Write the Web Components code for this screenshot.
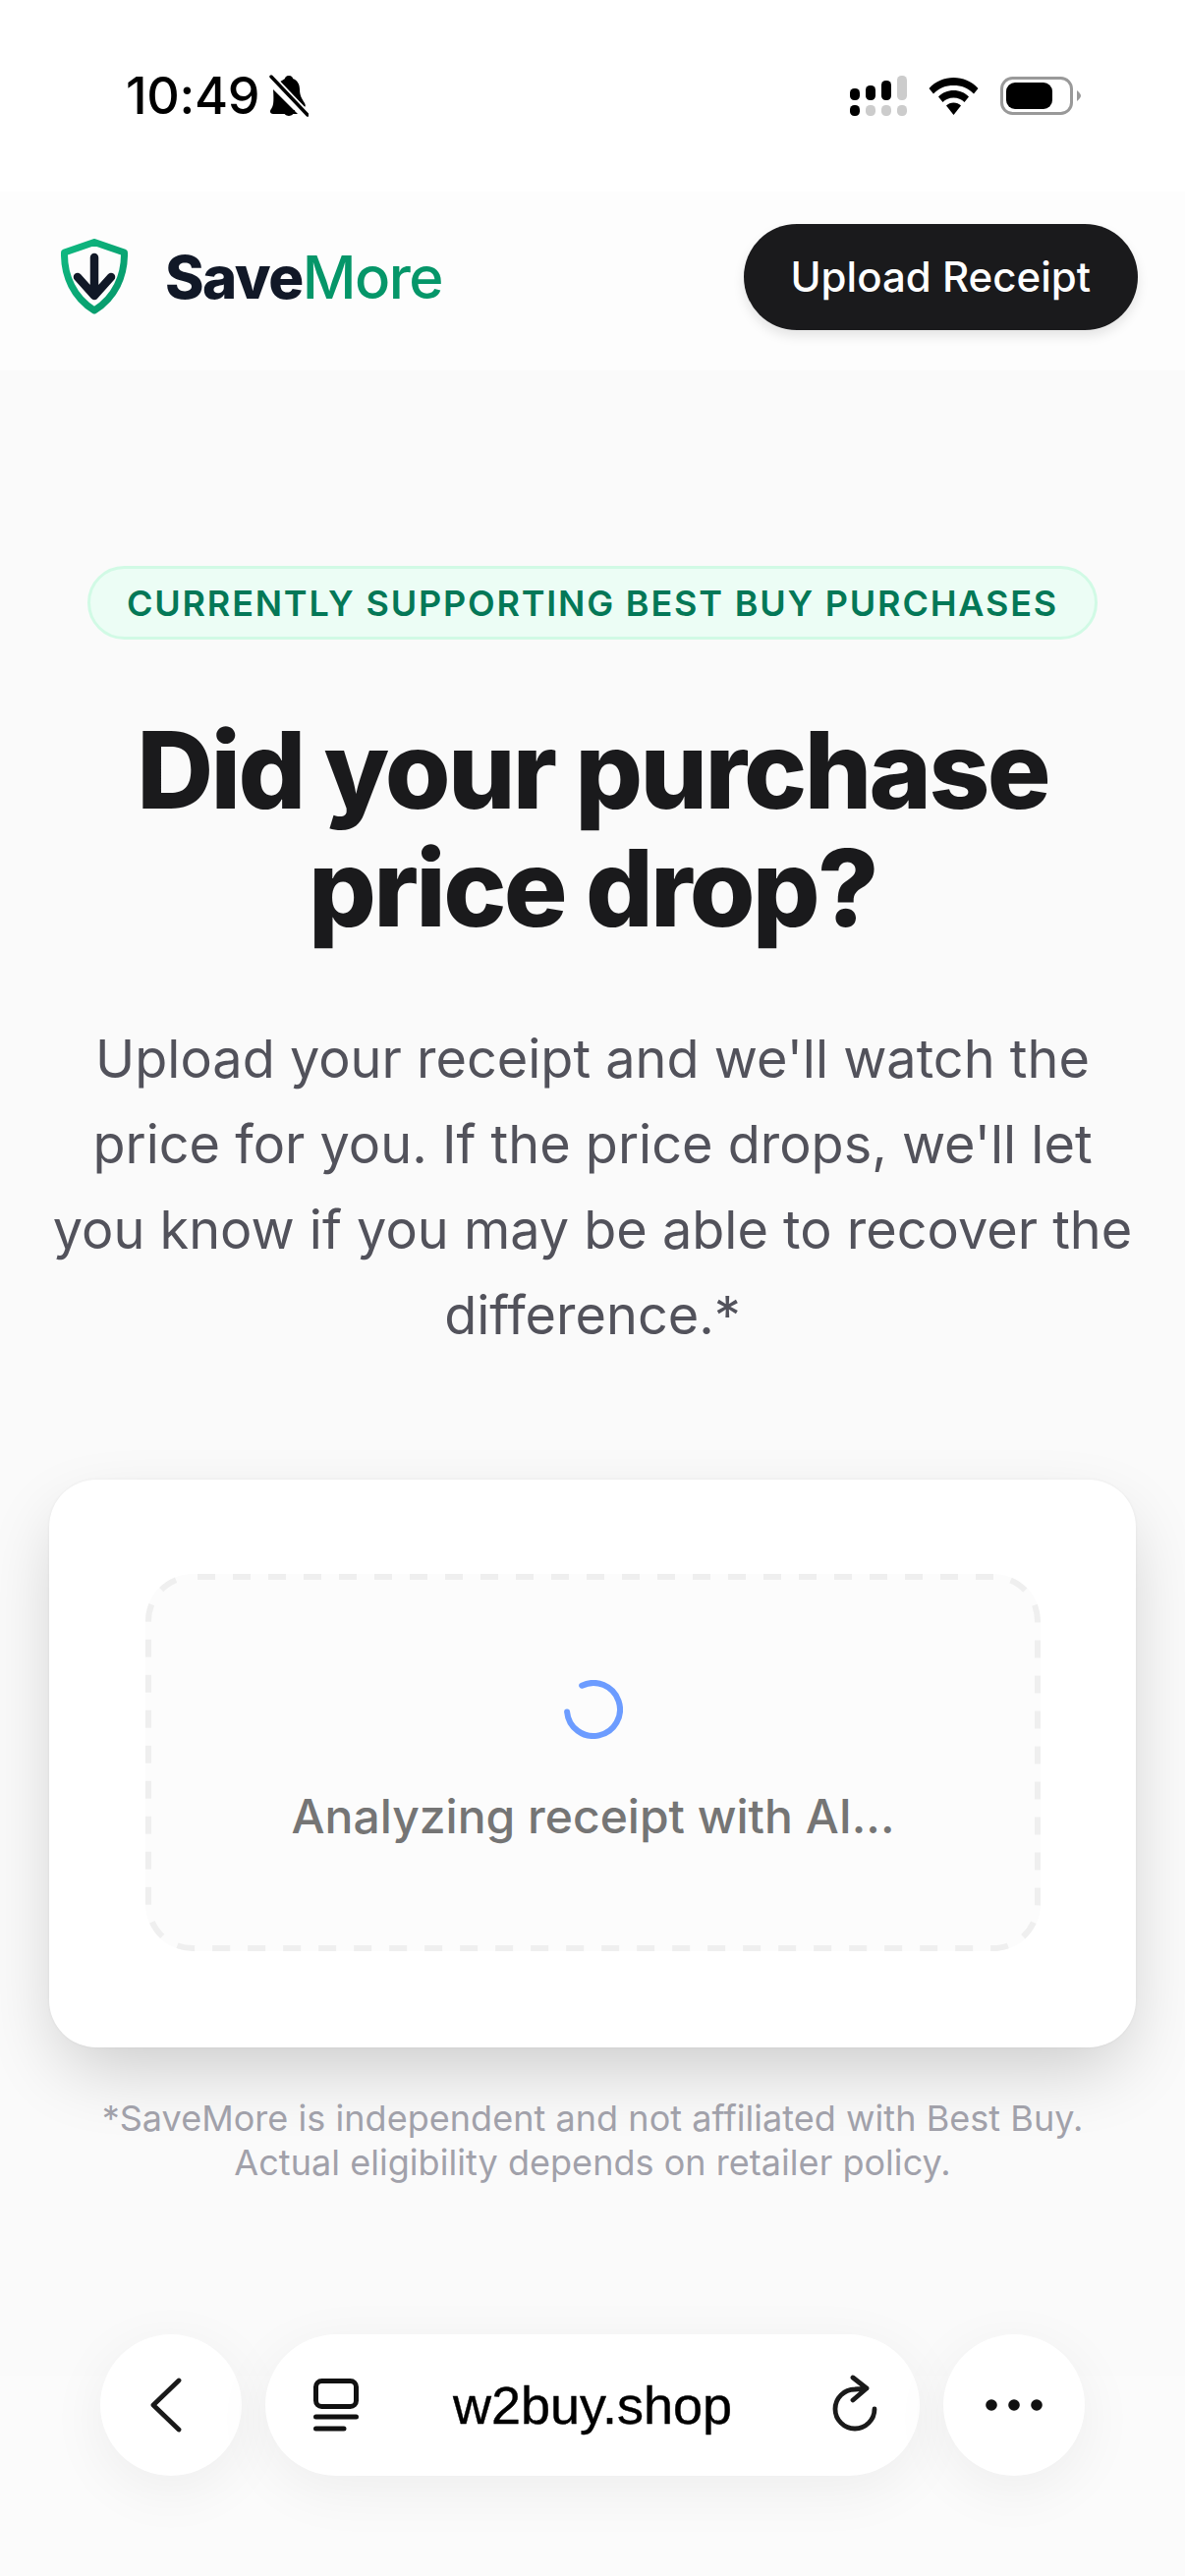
<!DOCTYPE html>
<html>
<head>
<meta charset="utf-8">
<style>
  html, body { margin: 0; padding: 0; height: 2622px; overflow: hidden; background: #fafafa; }
  body { font-family: Inter, "Liberation Sans", sans-serif; position: relative; }
</style>
</head>
<body>
<status-bar></status-bar>
<site-header></site-header>
<hero-section>
  <span slot="pill">CURRENTLY SUPPORTING BEST BUY PURCHASES</span>
  <span slot="title">Did your purchase<br>price drop?</span>
  <span slot="lead">Upload your receipt and we'll watch the<br>price for you. If the price drops, we'll let<br>you know if you may be able to recover the<br>difference.*</span>
</hero-section>
<upload-card>Analyzing receipt with AI...</upload-card>
<foot-note>*SaveMore is independent and not affiliated with Best Buy.<br>Actual eligibility depends on retailer policy.</foot-note>
<browser-bar></browser-bar>

<script>
//status bar at the top, time + system icons
class StatusBar extends HTMLElement {
  constructor() {
    super();
    this.attachShadow({ mode: "open" }).innerHTML = `
<style>
  :host { display: flex; justify-content: space-between; align-items: flex-start; height: 195px; box-sizing: border-box; padding: 70px 106px 0 128px; background: #fff; }
  .left { display: flex; align-items: center; gap: 10px; }
  .time { font: 500 52px/56px Inter, sans-serif; color: #000; letter-spacing: -0.3px; }
  .right { display: flex; align-items: center; gap: 22px; margin-top: 7px; }
  svg { display: block; }
</style>
<div class="left">
  <span class="time">10:49</span>
  <svg width="40" height="44" viewBox="0 0 40 44">
    <path d="M20 1c3 0 4 2 4 3 5 2 7 6 7 11 0 6 2 9 5 14 1 2 1 3 0 4L10 8c2-2 5-3 6-4 0-1 1-3 4-3zM4 15l25 25H4c-3 0-4-3-2-5 2-3 3-6 2-20zM14 36h12c0 3-3 6-6 6s-6-3-6-6z" fill="#000"/>
    <path d="M2 2l37 39" stroke="#fff" stroke-width="7"/>
    <path d="M2 2l37 39" stroke="#000" stroke-width="3.400" stroke-linecap="round"/>
  </svg>
</div>
<div class="right">
  <svg width="59" height="41" viewBox="0 0 59 41">
    <rect x="1" y="13" width="10" height="12" rx="4.500" fill="#000"/>
    <rect x="17" y="10" width="10" height="15" rx="4.500" fill="#000"/>
    <rect x="33" y="5" width="10" height="20" rx="4.500" fill="#000"/>
    <rect x="49" y="0" width="10" height="25" rx="4.500" fill="#ccc"/>
    <rect x="1" y="30" width="10" height="11" rx="4.500" fill="#000"/>
    <rect x="17" y="30" width="10" height="11" rx="4.500" fill="#ccc"/>
    <rect x="33" y="30" width="10" height="11" rx="4.500" fill="#ccc"/>
    <rect x="49" y="30" width="10" height="11" rx="4.500" fill="#ccc"/>
  </svg>
  <svg width="51" height="38" viewBox="0 0 50 38">
    <path d="M25 0c9.500 0 18 3.500 25 11l-4.500 5.500C40 10.500 33 8 25 8S10 10.500 4.500 16.500L0 11C7 3.500 15.500 0 25 0z" fill="#000"/>
    <path d="M25 13c6 0 11.500 2.200 15.500 6.500L36 25c-3-3-6.500-4.500-11-4.500S17 22 14 25l-4.500-5.500C13.500 15.200 19 13 25 13z" fill="#000"/>
    <path d="M25 25.500c3 0 5.500 1 7.500 3L25 38l-7.500-9.500c2-2 4.500-3 7.500-3z" fill="#000"/>
  </svg>
  <svg width="82" height="39" viewBox="0 0 82 39">
    <rect x="1.500" y="1.500" width="71" height="36" rx="11" fill="none" stroke="#999" stroke-width="3"/>
    <rect x="6" y="6" width="47" height="27" rx="9" fill="#000"/>
    <path d="M78 14C80.500 16 82 18 82 19.500S80.500 23 78 25z" fill="#999"/>
  </svg>
</div>`;
  }
}
customElements.define("status-bar", StatusBar);

//logo + upload button
class SiteHeader extends HTMLElement {
  constructor() {
    super();
    this.attachShadow({ mode: "open" }).innerHTML = `
<style>
  :host { display: flex; justify-content: space-between; align-items: center; height: 182px; box-sizing: border-box; padding: 0 48px 8px 62px; background: #fdfdfd; }
  .brand { display: flex; align-items: center; gap: 38px; }
  .name { font: 800 60px/72px Inter, sans-serif; letter-spacing: -1.5px; color: #111827; }
  .name b { font-weight: 500; color: #059669; }
  button { all: unset; display: block; height: 108px; box-sizing: border-box; padding: 0 48px; border-radius: 54px; background: #1a1a1c; color: #fff; font: 450 42px/108px Inter, sans-serif; box-shadow: 0 6px 12px rgba(0,0,0,.1); }
  svg { display: block; }
</style>
<div class="brand">
  <svg width="68" height="78" viewBox="0 0 68 78">
    <defs><linearGradient id="g" x1="0" y1="0" x2="1" y2="1"><stop offset="0" stop-color="#10b981"/><stop offset="1" stop-color="#059669"/></linearGradient></defs>
    <path d="M34 3.500L64.500 14C65 38 55 60 34 73 13 60 3 38 3.500 14z" fill="none" stroke="url(#g)" stroke-width="7" stroke-linejoin="round"/>
    <path d="M34 19V55M17 39L34 58 51 39" fill="none" stroke="#111827" stroke-width="8.500" stroke-linecap="round" stroke-linejoin="round"/>
  </svg>
  <span class="name">Save<b>More</b></span>
</div>
<button>Upload Receipt</button>`;
  }
}
customElements.define("site-header", SiteHeader);

class HeroSection extends HTMLElement {
  constructor() {
    super();
    this.attachShadow({ mode: "open" }).innerHTML = `
<style>
  :host { display: flex; flex-direction: column; align-items: center; text-align: center; padding-top: 199px; }
  .pill { box-sizing: border-box; height: 75px; padding: 0 37px; border: 3px solid #d1fae5; border-radius: 38px; background: #ecfdf5; color: #047857; font: 600 36px/71px Inter, sans-serif; letter-spacing: 1.8px; white-space: nowrap; }
  h1 { margin: 73px 0 0; font: 800 108px/120px Inter, sans-serif; letter-spacing: -2.7px; color: #1a1a1c; }
  p { margin: 70px 0 0; font: 400 54px/87px Inter, sans-serif; color: #52525b; white-space: nowrap; }
</style>
<div class="pill"><slot name="pill"></slot></div>
<h1><slot name="title"></slot></h1>
<p><slot name="lead"></slot></p>`;
  }
}
customElements.define("hero-section", HeroSection);

//card with the dashed drop zone in the loading state
class UploadCard extends HTMLElement {
  constructor() {
    super();
    this.attachShadow({ mode: "open" }).innerHTML = `
<style>
  :host { display: block; box-sizing: border-box; margin: 124px 50px 0; height: 578px; padding: 96px 97px 98px 98px; background: #fff; border-radius: 48px; box-shadow: 0 30px 75px -12px rgba(0,0,0,.2), 0 0 3px rgba(0,0,0,.06); }
  .zone { position: relative; box-sizing: border-box; height: 100%; display: flex; flex-direction: column; align-items: center; padding-top: 108px; border-radius: 48px; background: #fcfcfc; }
  .dash { position: absolute; inset: 0; }
  svg { display: block; }
  .msg { margin-top: 43px; font: 450 48px/72px Inter, sans-serif; color: #757575; }
</style>
<div class="zone">
  <svg class="dash" width="911" height="384" viewBox="0 0 911 384"><rect x="3" y="3" width="905" height="378" rx="45" fill="none" stroke="#efefef" stroke-width="6" stroke-dasharray="18 18" stroke-dashoffset="31"/></svg>
  <svg width="60" height="60" viewBox="0 0 60 60"><path d="M18.200 5.700A27 27 0 1 1 3.100 32.400" fill="none" stroke="#6c9cff" stroke-width="6" stroke-linecap="round"/></svg>
  <div class="msg"><slot></slot></div>
</div>`;
  }
}
customElements.define("upload-card", UploadCard);

class FootNote extends HTMLElement {
  constructor() {
    super();
    this.attachShadow({ mode: "open" }).innerHTML = `
<style>
  :host { display: block; position: relative; margin-top: 50px; text-align: center; font: 400 36px/45px Inter, sans-serif; letter-spacing: .04px; color: #a1a1aa; white-space: nowrap; }
</style>
<slot></slot>`;
  }
}
customElements.define("foot-note", FootNote);

//safari toolbar floating over the page
class BrowserBar extends HTMLElement {
  constructor() {
    super();
    this.attachShadow({ mode: "open" }).innerHTML = `
<style>
  :host { position: absolute; left: 0; right: 0; top: 2418px; bottom: 0; background: #fbfbfb; }
  .row { position: absolute; left: 102px; top: -42px; display: flex; gap: 24px; }
  .round, .url { height: 144px; background: #fff; border-radius: 72px; box-shadow: 0 14px 60px rgba(0,0,0,.06); display: flex; align-items: center; justify-content: center; }
  .round { width: 144px; }
  .back { margin-right: 10px; }
  .url { width: 666px; display: grid; grid-template-columns: 1fr auto 1fr; align-items: center; box-sizing: border-box; padding: 0 42px 0 49px; }
  .host { font: 400 54px/60px "Liberation Sans", sans-serif; color: #000; -webkit-text-stroke: .4px #000; margin-right: 7px; }
  .reload { justify-self: end; margin-top: -4px; }
  svg { display: block; }
</style>
<div class="row">
  <div class="round">
    <svg class="back" width="32" height="56" viewBox="0 0 32 56"><path d="M29 3L3 28 29 53" fill="none" stroke="#1a1a1a" stroke-width="4.800" stroke-linecap="round" stroke-linejoin="round"/></svg>
  </div>
  <div class="url">
    <svg width="46" height="54" viewBox="0 0 46 54"><rect x="2.500" y="2.500" width="41" height="26" rx="6" fill="none" stroke="#111" stroke-width="5"/><path d="M2.500 39H43.500M2.500 51H31" stroke="#111" stroke-width="5" stroke-linecap="round"/></svg>
    <span class="host">w2buy.shop</span>
    <svg class="reload" width="48" height="58" viewBox="0 0 48 58"><path d="M44 35A20 20 0 1 1 24 15L36 14M22 3L36 14 22 26" fill="none" stroke="#1a1a1a" stroke-width="4.800" stroke-linecap="round" stroke-linejoin="round"/></svg>
  </div>
  <div class="round">
    <svg width="58" height="12" viewBox="0 0 58 12"><circle cx="6" cy="6" r="5.800" fill="#111"/><circle cx="29" cy="6" r="5.800" fill="#111"/><circle cx="52" cy="6" r="5.800" fill="#111"/></svg>
  </div>
</div>`;
  }
}
customElements.define("browser-bar", BrowserBar);
</script>
</body>
</html>
